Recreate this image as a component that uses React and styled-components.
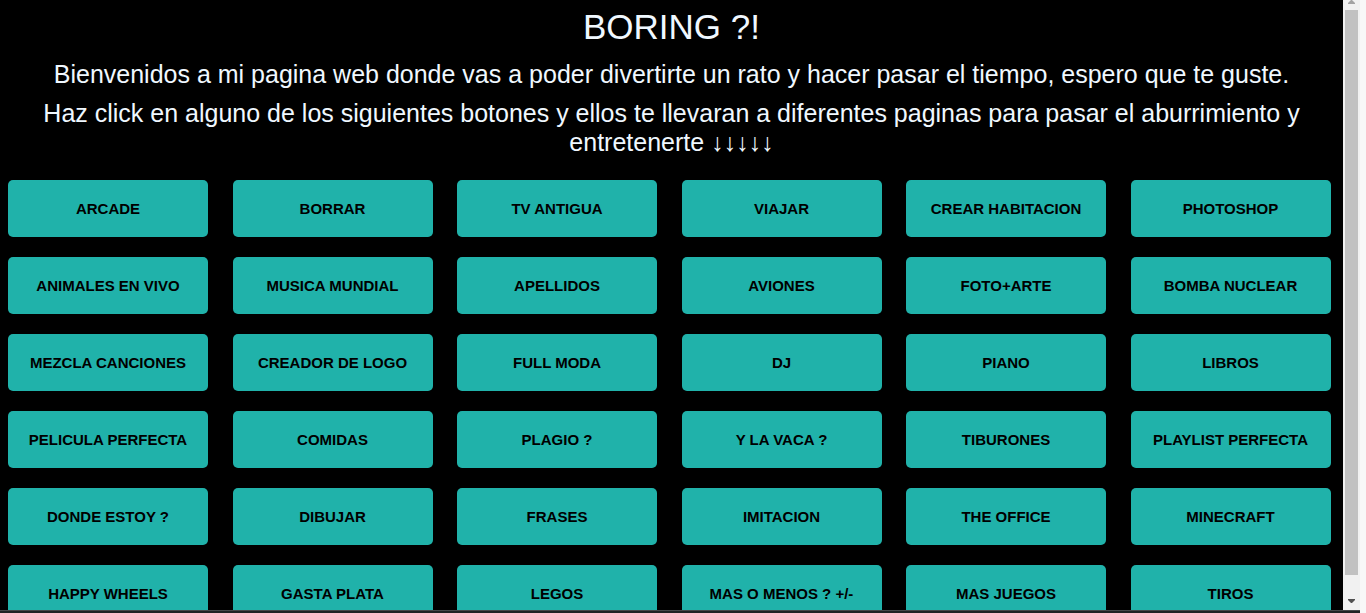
import React from 'react';
import styled, { createGlobalStyle } from 'styled-components';

const GlobalStyle = createGlobalStyle`
  * { box-sizing: border-box; }
  body {
    margin: 0;
    background: #f8f8f8;
    font-family: "Liberation Sans", Arial, sans-serif;
  }
`;

const Screen = styled.div`
  display: flex;
  flex-direction: column;
  height: 100vh;
  margin-right: 6px;
  overflow: hidden;
`;

const Viewport = styled.div`
  display: flex;
  flex: 1;
  min-height: 0;
`;

const Page = styled.main`
  flex: 1;
  min-width: 0;
  padding: 8px;
  overflow: hidden;
  background: #000;
  color: aliceblue;
  text-align: center;
`;

const Title = styled.h1`
  margin: 0 0 14px;
  font-size: 35px;
  font-weight: 400;
  line-height: 38px;
`;

const Intro = styled.p`
  margin: 0 0 10px;
  font-size: 25px;
  line-height: 29px;
`;

const Games = styled.nav`
  display: grid;
  grid-template-columns: repeat(auto-fill, minmax(200px, 1fr));
  gap: 20px;
  padding-top: 13px;
`;

const GameButton = styled.button`
  width: 200px;
  height: 57px;
  padding: 0;
  border: 0;
  border-radius: 5px;
  background: lightseagreen;
  color: #000;
  font-family: inherit;
  font-size: 15px;
  font-weight: 700;
  cursor: pointer;
`;

const ScrollTrack = styled.div`
  display: flex;
  flex-direction: column;
  align-items: center;
  width: 17px;
  background: #f1f1f1;
`;

const ScrollThumb = styled.div`
  flex: 1;
  width: 13px;
  background: #c1c1c1;
`;

const ScrollArrow = styled.svg`
  display: block;
  width: 17px;
  height: ${(p) => (p.$end ? 35 : 10)}px;
  fill: ${(p) => (p.$end ? '#505050' : '#a3a3a3')};
`;

const BottomEdge = styled.div`
  height: 3px;
  border-top: 1px solid #484848;
  background: #232323;
`;

const games = [
  'ARCADE', 'BORRAR', 'TV ANTIGUA', 'VIAJAR', 'CREAR HABITACION', 'PHOTOSHOP',
  'ANIMALES EN VIVO', 'MUSICA MUNDIAL', 'APELLIDOS', 'AVIONES', 'FOTO+ARTE', 'BOMBA NUCLEAR',
  'MEZCLA CANCIONES', 'CREADOR DE LOGO', 'FULL MODA', 'DJ', 'PIANO', 'LIBROS',
  'PELICULA PERFECTA', 'COMIDAS', 'PLAGIO ?', 'Y LA VACA ?', 'TIBURONES', 'PLAYLIST PERFECTA',
  'DONDE ESTOY ?', 'DIBUJAR', 'FRASES', 'IMITACION', 'THE OFFICE', 'MINECRAFT',
  'HAPPY WHEELS', 'GASTA PLATA', 'LEGOS', 'MAS O MENOS ? +/-', 'MAS JUEGOS', 'TIROS',
];

export default function App() {
  return (
    <>
      <GlobalStyle />
      <Screen>
        <Viewport>
          <Page>
            <Title>BORING ?!</Title>
            <Intro>
              Bienvenidos a mi pagina web donde vas a poder divertirte un rato y hacer pasar el
              tiempo, espero que te guste.
            </Intro>
            <Intro>
              Haz click en alguno de los siguientes botones y ellos te llevaran a diferentes
              paginas para pasar el aburrimiento y entretenerte ↓↓↓↓↓
            </Intro>
            <Games>
              {games.map((name) => (
                <GameButton key={name} type="button">{name}</GameButton>
              ))}
            </Games>
          </Page>
          <ScrollTrack aria-hidden="true">
            <ScrollArrow viewBox="0 0 17 10">
              <path d="M5 4 V3 L8 0 H9 L12 3 V4 Z" />
            </ScrollArrow>
            <ScrollThumb />
            <ScrollArrow $end viewBox="0 0 17 35">
              <path d="M5 24 H12 V25 L9 28 H8 L5 25 Z" />
            </ScrollArrow>
          </ScrollTrack>
        </Viewport>
        <BottomEdge />
      </Screen>
    </>
  );
}
